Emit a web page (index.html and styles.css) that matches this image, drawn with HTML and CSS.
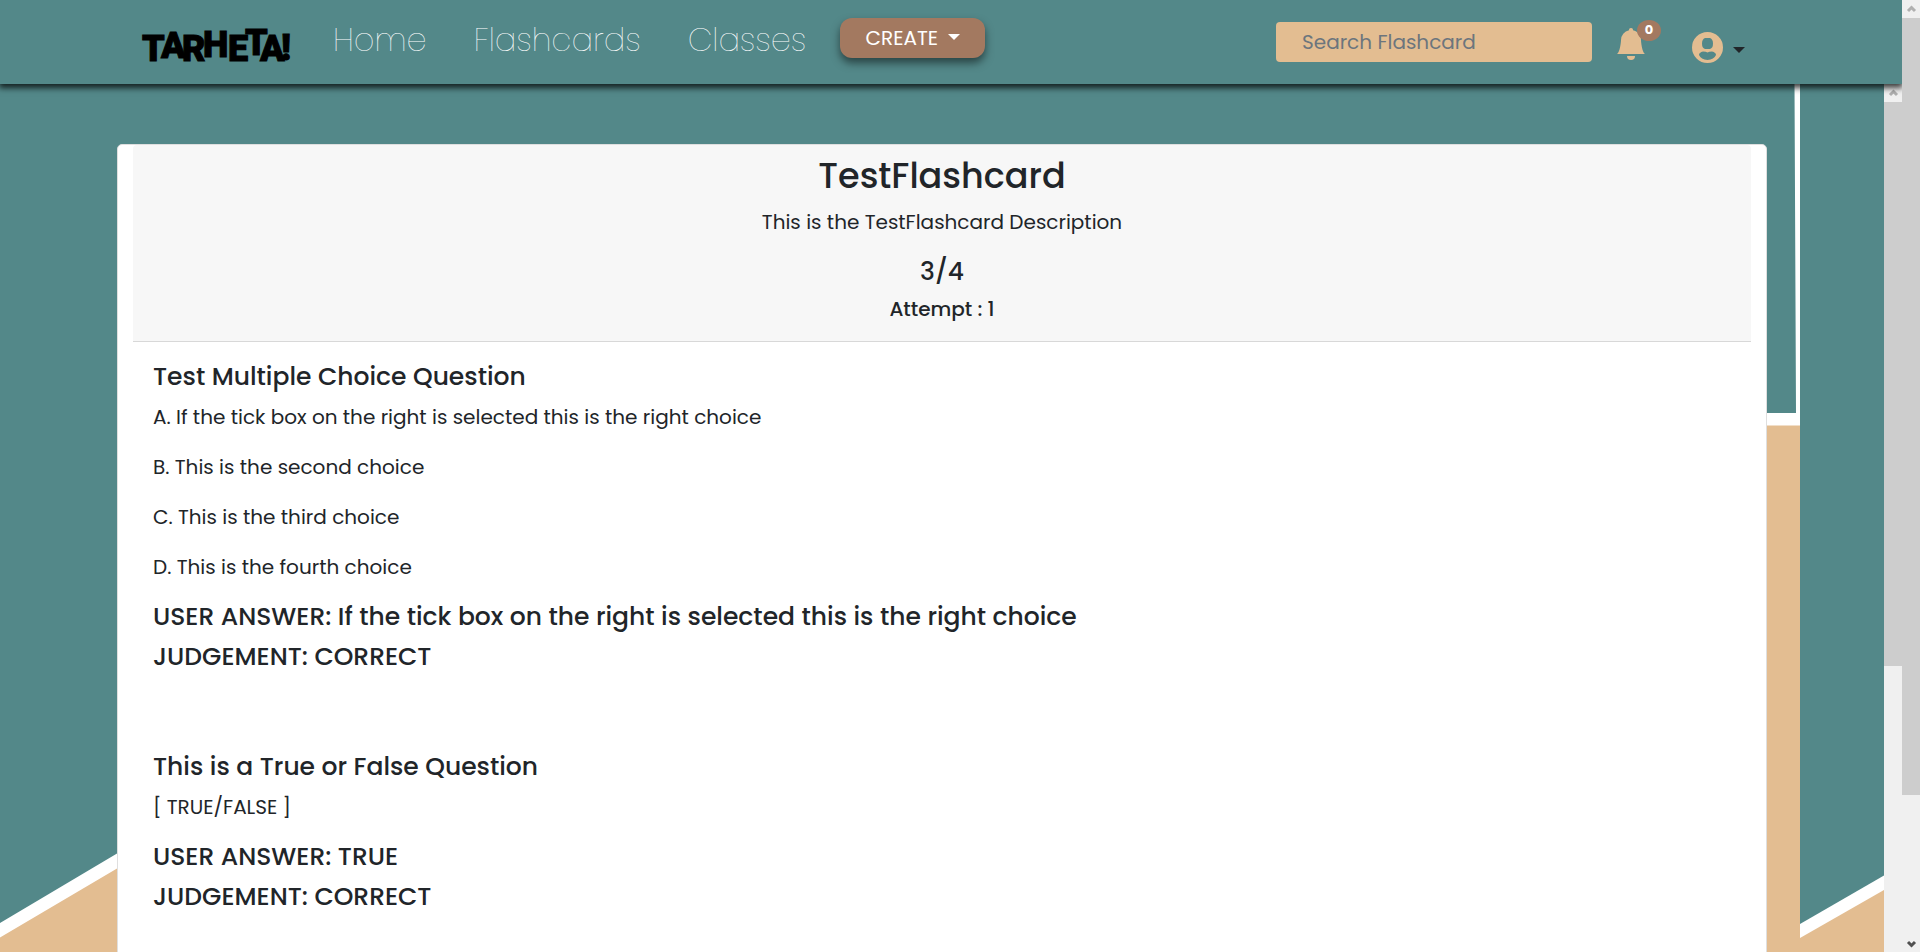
FILE: index.html
```html
<!DOCTYPE html>
<html lang="en">
<head>
<meta charset="utf-8">
<title>Tarheta!</title>
<link rel="stylesheet" href="styles.css">
</head>
<body>
<div class="app">
  <header class="navbar">
    <a class="brand" href="#" aria-label="Tarheta home">
      <svg class="brand-mark" width="156" height="56" viewBox="0 0 156 56">
        <text x="2 21 42 63 88 105 120 141" y="45 42 45 41 45 39 45 44">TARHETA!</text>
      </svg>
    </a>
    <nav class="nav-links">
      <a class="nav-link" href="#">Home</a>
      <a class="nav-link" href="#">Flashcards</a>
      <a class="nav-link" href="#">Classes</a>
    </nav>
    <button class="create" type="button">CREATE <span class="caret"></span></button>
    <div class="tools">
      <input class="search" type="search" placeholder="Search Flashcard" aria-label="Search Flashcard">
      <button class="icon-button bell" type="button" aria-label="Notifications">
        <svg width="28" height="32" viewBox="0 0 16 16" preserveAspectRatio="none"><path d="M8 16a2 2 0 0 0 2-2H6a2 2 0 0 0 2 2zm.995-14.901a1 1 0 1 0-1.99 0A5.002 5.002 0 0 0 3 6c0 1.098-.5 6-2 7h14c-1.500-1-2-5.902-2-7 0-2.420-1.720-4.440-4.005-4.901z" transform="translate(-1.140 0) scale(1.143 1)"/></svg>
        <span class="badge">0</span>
      </button>
      <button class="icon-button account" type="button" aria-label="Account">
        <svg width="31" height="31" viewBox="0 0 31 31"><path fill-rule="evenodd" d="M15.500 0a15.500 15.500 0 1 1 0 31a15.500 15.500 0 0 1 0-31zM13 6Q10 7 10 11.500Q10 16 13 17H18Q21 16 21 11.500Q21 7 18 6zM15.500 20.500Q14 19.500 11 19.500Q7 20.500 7 23Q9 27.500 15.500 28Q22 27.500 24 23Q24 20.500 20 19.500Q17 19.500 15.500 20.500z"/></svg>
        <span class="caret"></span>
      </button>
    </div>
  </header>
  <div class="content">
    <main class="page">
      <svg class="backdrop" viewBox="0 0 1884 868" preserveAspectRatio="none" aria-hidden="true">
        <rect class="teal" width="1884" height="868"/>
        <path class="white" d="M0 839L117 769.500L250 690V868H0z"/>
        <path class="tan" d="M0 853.500L117 784.500L250 705V868H0z"/>
        <path class="white" d="M1794.500 0H1800V342H1700V329H1796z"/>
        <path class="tan" d="M1700 341.500H1800V868H1700z"/>
        <path class="white" d="M1800 840L1884 791.500V868H1800z"/>
        <path class="tan" d="M1800 854L1884 806V868H1800z"/>
      </svg>
      <article class="card">
        <header class="card-header">
          <h1 class="title">TestFlashcard</h1>
          <p class="text">This is the TestFlashcard Description</p>
          <h2 class="heading">3/4</h2>
          <h3 class="attempt">Attempt : 1</h3>
        </header>
        <div class="card-body">
          <section class="question">
            <h2 class="heading">Test Multiple Choice Question</h2>
            <p class="text">A. If the tick box on the right is selected this is the right choice</p>
            <p class="text">B. This is the second choice</p>
            <p class="text">C. This is the third choice</p>
            <p class="text">D. This is the fourth choice</p>
            <h3 class="heading">USER ANSWER: If the tick box on the right is selected this is the right choice</h3>
            <h3 class="heading">JUDGEMENT: CORRECT</h3>
          </section>
          <section class="question">
            <h2 class="heading">This is a True or False Question</h2>
            <p class="text">[ TRUE/FALSE ]</p>
            <h3 class="heading">USER ANSWER: TRUE</h3>
            <h3 class="heading">JUDGEMENT: CORRECT</h3>
          </section>
        </div>
      </article>
    </main>
    <div class="scrollbar" aria-hidden="true">
      <svg class="arrow" viewBox="0 0 18 18"><path d="M6 11L9.500 7.500L13 11"/></svg>
      <div class="thumb thumb-inner"></div>
    </div>
  </div>
</div>
<div class="scrollbar scrollbar-outer" aria-hidden="true">
  <svg class="arrow" viewBox="0 0 18 18"><path d="M6 11L9.500 7.500L13 11"/></svg>
  <div class="thumb thumb-outer"></div>
  <svg class="arrow arrow-down" viewBox="0 0 18 18"><path d="M6 8L9.500 11.500L13 8"/></svg>
</div>
</body>
</html>
```
FILE: styles.css
```css
* { box-sizing: border-box; }
body {
  margin: 0;
  height: 100vh;
  display: flex;
  overflow: hidden;
  font-family: Poppins, Inter, sans-serif;
  font-size: 20px;
  line-height: 30px;
  color: #212529;
}
h1, h2, h3, p { margin: 0; }
button { font: inherit; border: 0; padding: 0; cursor: pointer; }
svg { display: block; }

.app { flex: 1; min-width: 0; display: flex; flex-direction: column; }

.navbar {
  position: relative;
  z-index: 1;
  flex: none;
  height: 84px;
  padding: 0 157px 4px 140px;
  display: flex;
  align-items: center;
  background: #538889;
  box-shadow: 0 3px 6px 1px rgba(0, 0, 0, 0.75);
}
.brand-mark { margin-top: 8px; }
.brand-mark text {
  font-family: Roboto, sans-serif;
  font-weight: 900;
  font-size: 36px;
  stroke: #000;
  stroke-width: 1px;
}
.nav-links { display: flex; gap: 47px; margin-left: 37px; }
.nav-link {
  font-size: 32px;
  font-weight: 200;
  line-height: 48px;
  color: #fff;
  text-decoration: none;
}
.caret {
  display: inline-block;
  border: 6px solid transparent;
  border-top-color: currentColor;
  border-bottom: 0;
}
.create {
  width: 145px;
  height: 40px;
  margin: 0 0 4px 34px;
  display: flex;
  justify-content: center;
  align-items: center;
  gap: 10px;
  border-radius: 12px;
  background: #a37960;
  color: #fff;
  box-shadow: 0 5px 9px rgba(0, 0, 0, 0.5);
}
.create .caret { margin-bottom: 3px; }
.tools { margin-left: auto; display: flex; align-items: center; }
.search {
  width: 316px;
  height: 40px;
  margin-top: 4px;
  padding: 0 26px;
  border: 0;
  border-radius: 4px;
  background: #e3bd91;
  font: inherit;
}
.search::placeholder { color: #6c757d; opacity: 1; }
.icon-button { background: none; color: #212529; display: flex; align-items: center; }
.icon-button path { fill: #e3bd91; }
.bell { position: relative; margin: 8px 0 0 25px; }
.badge {
  position: absolute;
  top: -8px;
  right: -16px;
  width: 24px;
  height: 21px;
  border-radius: 50%;
  background: #a37960;
  color: #fff;
  font-size: 13px;
  font-weight: 700;
  line-height: 19px;
  text-align: center;
}
.account { margin: 14px 0 0 47px; gap: 10px; }
.account .caret { margin-top: 6px; }

.content { flex: 1; min-height: 0; display: flex; }
.page {
  position: relative;
  flex: 1;
  min-width: 0;
  overflow: hidden;
  padding: 60px 117px 0;
}
.backdrop { position: absolute; inset: 0; width: 100%; height: 100%; }
.teal { fill: #538889; }
.white { fill: #fff; }
.tan { fill: #e3bd91; }

.card {
  position: relative;
  padding: 0 15px 200px;
  border: 1px solid #dfdfdf;
  border-radius: 5px;
  background: #fff;
}
.card-header {
  padding: 10px 20px;
  border-bottom: 1px solid #d8d8d8;
  border-radius: 4px 4px 0 0;
  background: #f7f7f7;
  text-align: center;
}
.card-body { padding: 20px; }
.title { margin-bottom: 10px; font-size: 35px; font-weight: 500; line-height: 42px; }
.heading { margin-bottom: 10px; font-size: 25px; font-weight: 500; line-height: 30px; }
.attempt { margin-bottom: 10px; font-size: 20px; font-weight: 500; line-height: 24px; }
.text { margin-bottom: 20px; }
.question { margin-bottom: 80px; }

.scrollbar { flex: none; width: 18px; display: flex; flex-direction: column; background: #f0f0f0; }
.scrollbar-outer { position: relative; z-index: 2; }
.arrow { flex: none; width: 18px; height: 18px; fill: none; stroke: #b0b0b0; stroke-width: 3px; }
.arrow-down { margin-top: auto; stroke: #505050; }
.thumb { background: #cdcdcd; }
.thumb-inner { height: 65%; }
.thumb-outer { height: 81.6%; }
```
